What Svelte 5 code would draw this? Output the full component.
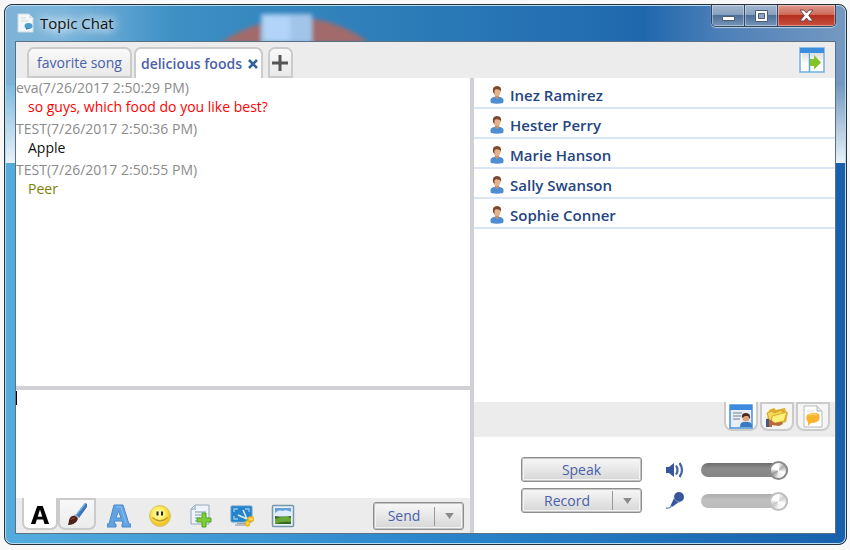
<script lang="ts">
   const tabs = ["favorite song", "delicious foods"];
   let activeTab = $state("delicious foods");

   const messages = [
      { head: "eva(7/26/2017 2:50:29 PM)", text: "so guys, which food do you like best?", tone: "red" },
      { head: "TEST(7/26/2017 2:50:36 PM)", text: "Apple", tone: "black" },
      { head: "TEST(7/26/2017 2:50:55 PM)", text: "Peer", tone: "olive" },
   ];

   const members = ["Inez Ramirez", "Hester Perry", "Marie Hanson", "Sally Swanson", "Sophie Conner"];

   let draft = $state("");
   let speaker = $state(100);
   let microphone = $state(100);
</script>

{#snippet person()}
   <svg class="person" width="14" height="18" viewBox="0 0 14 18" aria-hidden="true">
      <path d="M1 17q-2-5 3-6l3-1 3 1q5 1 3 6-6 1.500-12 0z" fill="#4e8dd0" />
      <path d="M5 9h4v2.500l-2 1.500-2-1.500z" fill="#c98e68" />
      <ellipse cx="7" cy="5.500" rx="3.500" ry="4.500" fill="#e3b18c" />
      <path d="M3 6Q2 0 7 0q5 0 4 6l-1-2-4-1-1.500 1.500L4.500 8z" fill="#78472d" />
   </svg>
{/snippet}

<main class="window">
   <header class="titlebar">
      <svg class="wallpaper" width="150" height="36" viewBox="0 0 150 36" aria-hidden="true">
         <defs>
            <filter id="soft"><feGaussianBlur stdDeviation="2" /></filter>
         </defs>
         <g filter="url(#soft)">
            <path d="M0 38Q35 14 78 13q38 0 72 25z" fill="#a26b6a" />
            <path d="M41 9h51v29H41z" fill="#a1c4e9" />
            <path d="M44 11h26v25H44z" fill="#b1d4f8" />
         </g>
      </svg>
      <svg class="app-icon" width="17" height="20" viewBox="0 0 17 20" aria-hidden="true">
         <path d="M2 1h10l4 4v14H1V1z" fill="#f4f7fa" stroke="#cbdbe6" />
         <path d="M12 1v4h4" fill="#d5e1ea" />
         <path d="M4 5h5M4 8h7" stroke="#d0d9df" />
         <ellipse cx="11.500" cy="13" rx="4" ry="3" fill="#4b9dce" />
         <path d="M9 15v2l4-2z" fill="#3581b4" />
      </svg>
      <h1>Topic Chat</h1>
      <div class="caption">
         <button aria-label="Minimize">
            <svg width="15" height="12" viewBox="0 0 15 12"><path d="M1.500 6.500h12v4h-12z" fill="#fff" stroke="#4d5e74" /></svg>
         </button>
         <button aria-label="Maximize">
            <svg width="15" height="14" viewBox="0 0 15 14">
               <path d="M1.500 1.500h12v11h-12z" fill="#fff" stroke="#4d5e74" />
               <path d="M4.500 4.500h6v5h-6z" fill="#8ea3bc" stroke="#4d5e74" />
            </svg>
         </button>
         <button class="shut" aria-label="Close">
            <svg width="15" height="13" viewBox="0 0 15 13">
               <path d="M1 1h4l2.500 3L10 1h4L9.800 6.500 14 12h-4L7.500 9 5 12H1l4.200-5.500z" fill="#fff" stroke="#69494f" />
            </svg>
         </button>
      </div>
   </header>

   <div class="client">
      <nav class="topics" aria-label="Topics">
         {#each tabs as tab}
            <div class="topic" class:active={tab === activeTab}>
               <button class="topic-name" onclick={() => (activeTab = tab)}>{tab}</button>
               {#if tab === activeTab}
                  <button class="topic-close" aria-label="Close topic">
                     <svg width="10" height="10" viewBox="0 0 10 10"><path d="M1 1l8 8M9 1L1 9" stroke="#2f6498" stroke-width="2.600" /></svg>
                  </button>
               {/if}
            </div>
         {/each}
         <button class="add" aria-label="Add topic">
            <svg width="16" height="16" viewBox="0 0 16 16"><path d="M8 0v16M0 8h16" stroke="#555" stroke-width="3" /></svg>
         </button>
         <button class="toggle" aria-label="Toggle side panel">
            <svg width="26" height="26" viewBox="0 0 26 26">
               <defs>
                  <linearGradient id="pane" x2="0" y2="1"><stop stop-color="#dcdcdc" /><stop offset="0.700" stop-color="#fff" /></linearGradient>
               </defs>
               <path d="M1 1h24v24H1z" fill="#fff" stroke="#73aee0" stroke-width="1.500" />
               <path d="M3 5h7v18H3zM12 5h12v18H12z" fill="url(#pane)" />
               <path d="M1 1h24v5H1z" fill="#3b8de0" />
               <path d="M10.500 5v20" stroke="#5ca7e2" stroke-width="1.500" />
               <path d="M11 12h4V8l7 7.500-7 7V19h-4z" fill="#84c225" />
            </svg>
         </button>
      </nav>

      <div class="panes">
         <section class="talk">
            <div class="log">
               {#each messages as message}
                  <article>
                     <p class="head">{message.head}</p>
                     <p class="text {message.tone}">{message.text}</p>
                  </article>
               {/each}
            </div>
            <div class="compose">
               <span class="caret"></span>
               <textarea aria-label="Message" bind:value={draft}></textarea>
            </div>
            <div class="toolbar">
               <button class="tool first" aria-label="Font">
                  <svg width="20" height="20" viewBox="0 0 20 22">
                     <path fill-rule="evenodd" d="M7 1h6l7 20h-5l-1.500-5h-7L5 21H0zM10 5L7.500 13h5z" fill="#000" />
                  </svg>
               </button>
               <button class="tool brush" aria-label="Text color">
                  <svg width="22" height="24" viewBox="0 0 22 24">
                     <path d="M10 13L19 1l2 1v3l-8 11z" fill="#3976bd" />
                     <path d="M11 12l8-10" stroke="#75acdf" stroke-width="1.500" />
                     <path d="M9 12l4 3-2 3-4-3z" fill="#a8b0b8" />
                     <path d="M2 23q1-3 1-5 2-5 6-4 4 2 2 5-3 4-9 4z" fill="#4b2119" />
                     <path d="M5 18q2-3 4-2" stroke="#8f5141" fill="none" />
                  </svg>
               </button>
               <div class="plain-tools">
                  <button class="tool" aria-label="Font effects">
                     <svg width="24" height="24" viewBox="0 0 24 24">
                        <path fill-rule="evenodd" d="M7 1h9l6 19h2v3h-9v-3h1l-1-3H8l-1 3h2v3H0v-3h2zM11.500 7L9 14h5z" fill="#63a3e2" stroke="#4a89ca" />
                        <path d="M9 3h5l5 16" fill="none" stroke="#8ac1f1" />
                     </svg>
                  </button>
                  <button class="tool" aria-label="Emoticons">
                     <svg width="24" height="24" viewBox="0 0 24 24">
                        <defs>
                           <radialGradient id="smile" cx="0.450" cy="0.400"><stop stop-color="#fffcc4" /><stop offset="0.600" stop-color="#ffee62" /><stop offset="1" stop-color="#ecc52f" /></radialGradient>
                        </defs>
                        <circle cx="12" cy="12" r="10.500" fill="url(#smile)" stroke="#dfc468" />
                        <path d="M8.500 7.500h2v4h-2zM13 7.500h2v4h-2z" fill="#272218" />
                        <path d="M4.500 13.500q7.500 7 15 0" fill="none" stroke="#c29728" stroke-width="1.200" />
                     </svg>
                  </button>
                  <button class="tool" aria-label="Send file">
                     <svg width="24" height="24" viewBox="0 0 24 24">
                        <path d="M6 1h14v19H2V5z" fill="#edf3f8" stroke="#93a8b9" />
                        <path d="M6 1v4H2M6 8h11M6 11h6M6 14h5M6 17h5" fill="none" stroke="#a3b8c8" stroke-width="1.500" />
                        <path d="M13 9h4v5h5v4h-5v5h-4v-5H8v-4h5z" fill="#79cf35" stroke="#56a326" />
                     </svg>
                  </button>
                  <button class="tool" aria-label="Screen capture">
                     <svg width="24" height="24" viewBox="0 0 24 24">
                        <path d="M7 19h8v2H7z" fill="#9aa6ae" /><path d="M5 21h12" stroke="#b5bec4" stroke-width="2" />
                        <rect x="1" y="2" width="21" height="16" rx="1" fill="#2383cb" stroke="#5f9cc6" />
                        <path d="M4 8V5h4M15 5h4v3M4 12v3h4" fill="none" stroke="#8fcbed" stroke-width="1.300" />
                        <path d="M13 6l4 9M8 11l9 4" stroke="#dfebf3" stroke-width="1.600" />
                        <ellipse cx="21" cy="15" rx="3" ry="2" fill="#f8d95b" stroke="#f0b81b" stroke-width="1.500" />
                        <ellipse cx="17.500" cy="19.500" rx="2" ry="2.500" fill="#f8d95b" stroke="#f0b81b" stroke-width="1.500" />
                     </svg>
                  </button>
                  <button class="tool" aria-label="Send picture">
                     <svg width="24" height="24" viewBox="0 0 24 24">
                        <rect x="1.500" y="1.500" width="21" height="21" rx="1" fill="#e9f1f5" stroke="#7397ad" stroke-width="1.500" />
                        <path d="M4 4h16v16H4z" fill="#649fdc" />
                        <path d="M4 9q4-4 7-2 5-2 9 1v5H4z" fill="#dcecfa" />
                        <path d="M4 12q7 1 16 0v8H4z" fill="#356b24" />
                        <path d="M4 15q9-4 16-1v4q-10-1-16 2z" fill="#68a936" />
                     </svg>
                  </button>
               </div>
               <div class="split send">
                  <button>Send</button>
                  <button class="more" aria-label="Send options"><svg width="9" height="6" viewBox="0 0 10 7"><path d="M0 0h10L5 7z" fill="#8b8b8b" /></svg></button>
               </div>
            </div>
         </section>

         <aside class="side">
            <ul class="members">
               {#each members as name}
                  <li>{@render person()}<span>{name}</span></li>
               {/each}
            </ul>
            <div class="views">
               <button class="view active" aria-label="Members">
                  <svg width="24" height="25" viewBox="0 0 24 25">
                     <path d="M1 1h22v23H1z" fill="#e9eef5" stroke="#4792dc" stroke-width="1.500" />
                     <path d="M1 1h22v5H1z" fill="#3d8ae0" />
                     <path d="M4 9h9M4 12h8M4 15h7" stroke="#9ba5b1" stroke-width="1.500" />
                     <path d="M11 23q0-5 4-5h4q4 0 4 5z" fill="#397bc2" />
                     <circle cx="17" cy="14" r="3.500" fill="#dda27c" />
                     <path d="M13 14q-1-5 4-5t4 6l-2-3h-3z" fill="#4f2b24" />
                  </svg>
               </button>
               <button class="view" aria-label="Files">
                  <svg width="24" height="24" viewBox="0 0 24 24">
                     <path d="M2 15l2-10 5-2 2 2 9-2 1 4 2 1-2 9-12 3z" fill="#e2ad29" />
                     <path d="M2 8l5-2 2 2 8-3 1 8-13 4z" fill="#f7d95a" stroke="#d7a52a" />
                     <path d="M7 11l15-4-3 9-13 3z" fill="#fff079" stroke="#daae31" />
                     <path d="M2 14v8h5v-2l7 1 4-2-1-2-7 1-4-3z" fill="#b8693c" />
                     <path d="M1 14h3v8H1z" fill="#47597f" />
                  </svg>
               </button>
               <button class="view" aria-label="Messages">
                  <svg width="20" height="23" viewBox="0 0 20 23">
                     <path d="M1 1h13l5 5v16H1z" fill="#fff" stroke="#b3bac0" />
                     <path d="M14 1v5h5" fill="#e1e4e7" stroke="#b3bac0" />
                     <path d="M4 6h7" stroke="#d9dde0" />
                     <path d="M4 10q6-4 12-1 2 5-2 8-3 1-6 1l-3 3v-4q-3-3-1-7z" fill="#f9b42e" />
                     <path d="M6 10q4-2 8 0" stroke="#ffe38b" fill="none" />
                  </svg>
               </button>
            </div>
            <div class="audio">
               <div class="audio-row">
                  <button class="speak">Speak</button>
                  <label for="speaker" aria-label="Speaker volume">
                     <svg width="20" height="20" viewBox="0 0 20 20">
                        <path d="M1 7h3l5-4v14l-5-4H1z" fill="#38569c" />
                        <path d="M11 5.500q3 4.500 0 9M14.500 3q5 7 0 14" fill="none" stroke="#4563a6" stroke-width="2.200" />
                     </svg>
                  </label>
                  <input id="speaker" type="range" bind:value={speaker} />
               </div>
               <div class="audio-row">
                  <div class="split record">
                     <button>Record</button>
                     <button class="more" aria-label="Record options"><svg width="9" height="6" viewBox="0 0 10 7"><path d="M0 0h10L5 7z" fill="#8b8b8b" /></svg></button>
                  </div>
                  <label for="microphone" aria-label="Microphone volume">
                     <svg width="20" height="20" viewBox="0 0 20 20">
                        <circle cx="14" cy="6" r="5" fill="#38569c" />
                        <path d="M9 7l5 4-7 5H5z" fill="#38569c" />
                        <path d="M1 17q3 1 6-2" fill="none" stroke="#8197c7" stroke-width="1.500" />
                        <path d="M9 6q1 5 6 5" fill="none" stroke="#8197c7" />
                     </svg>
                  </label>
                  <input id="microphone" class="faint" type="range" bind:value={microphone} />
               </div>
            </div>
         </aside>
      </div>
   </div>
</main>

<style>
   :global(body) {
      background: #f8f8f8;
   }

   :global(*) {
      box-sizing: border-box;
   }

   .window {
      font-family: "Open Sans", "Noto Sans", sans-serif;
      font-size: 14px;
      line-height: 20px;
      display: flex;
      flex-direction: column;
      min-height: calc(100vh - 9px);
      margin: 4px 3px 5px 4px;
      padding: 0 10px 10px;
      border: 1px solid #25303b;
      border-radius: 8px;
      box-shadow: inset 0 0 0 1px #b7dcf0;
      background:
         linear-gradient(90deg, #7fb3d6 0, #79b5dc 60px, #3d8fc4 170px, #2d7eb9 45%, #2068ae 76%, #4c7fb8 85%, #7599c1) 0 0 / 100% 80px no-repeat,
         linear-gradient(#8abfe000, #e8f2f8) 0 80px / 100% 78px no-repeat,
         linear-gradient(90deg, #80bce0, #2d7eb9, #7599c1) 0 80px / 100% 78px no-repeat,
         linear-gradient(90deg, #54acdd, #2b86cc 50%, #1860ae);
   }

   button {
      font: inherit;
      color: #4961a9;
      padding: 0;
      border: 0;
      background: none;
      cursor: pointer;
   }

   svg {
      display: block;
   }

   p,
   h1,
   ul {
      margin: 0;
      padding: 0;
   }

   .titlebar {
      position: relative;
      display: flex;
      align-items: center;
      gap: 6px;
      height: 36px;
      padding-left: 2px;
   }

   .wallpaper {
      position: absolute;
      left: 25%;
      top: 0;
   }

   h1 {
      flex: 1;
      font-size: 15px;
      font-weight: 400;
      color: #111;
      text-shadow: 0 0 8px #fff, 0 0 12px #fff, 0 0 16px #fff;
   }

   .caption {
      display: flex;
      align-self: flex-start;
      height: 22px;
      border: 1px solid #344760;
      border-top: 0;
      border-radius: 0 0 5px 5px;
      box-shadow: 0 1px 1px #bdd2e5;
      overflow: hidden;
   }

   .caption button {
      display: grid;
      place-items: center;
      width: 33px;
      border-right: 1px solid #344760;
      background: linear-gradient(#a5b9d0, #87a1bf 45%, #4d6f99 50%, #7594b8);
      box-shadow: inset 0 0 0 1px #ffffff60;
   }

   .caption .shut {
      width: 57px;
      border: 0;
      background: linear-gradient(#df9a8d, #cf6b5b 45%, #b52e1e 50%, #c9503f);
   }

   .client {
      flex: 1;
      display: flex;
      flex-direction: column;
      border: 1px solid #5b7183;
      background: #fff;
   }

   .topics {
      display: flex;
      align-items: flex-end;
      gap: 2px;
      height: 36px;
      padding: 0 10px 0 11px;
      background: #ececec;
   }

   .topic,
   .add {
      display: flex;
      align-items: center;
      height: 31px;
      border: 2px solid #cbcbcb;
      border-radius: 7px 7px 0 0;
      background: linear-gradient(#f9f9f9, #e9e9e9);
   }

   .topic {
      padding: 0 8px;
      gap: 6px;
   }

   .topic.active {
      padding: 0 3px 0 5px;
      border-bottom: 0;
      background: #fff;
      font-weight: 600;
   }

   .add {
      justify-content: center;
      width: 25px;
      margin-left: 3px;
   }

   .toggle {
      align-self: center;
      margin-left: auto;
   }

   .panes {
      flex: 1;
      display: grid;
      grid-template-columns: minmax(0, 454fr) minmax(0, 365fr);
   }

   .talk {
      display: flex;
      flex-direction: column;
   }

   .log {
      flex: 1;
      border-bottom: 4px solid #d0d0d5;
   }

   .log article {
      padding-bottom: 3px;
   }

   .log p {
      line-height: 19px;
   }

   .head {
      color: #8b8b8b;
   }

   .text {
      padding-left: 12px;
   }

   .red {
      color: #f00;
   }

   .black {
      color: #111;
   }

   .olive {
      color: #808000;
   }

   .compose {
      position: relative;
      display: flex;
      height: 108px;
   }

   .caret {
      position: absolute;
      left: 0;
      top: 1px;
      width: 1px;
      height: 14px;
      background: #000;
   }

   textarea {
      flex: 1;
      padding: 0 2px;
      border: 0;
      outline: 0;
      resize: none;
      font: inherit;
   }

   .toolbar {
      display: flex;
      height: 35px;
      padding: 0 6px;
      background: #ececec;
   }

   .tool {
      display: grid;
      place-items: center;
   }

   .first,
   .brush {
      width: 36px;
      height: 32px;
      border: 2px solid #cbcbcb;
      border-top: 0;
      border-radius: 0 0 7px 7px;
      background: #fff;
   }

   .first {
      padding-top: 4px;
   }

   .brush {
      width: 38px;
      border-top: 2px solid #cbcbcb;
      background: linear-gradient(#f8f8f8, #ececec);
   }

   .plain-tools {
      display: flex;
      align-items: center;
      gap: 17px;
      padding-left: 11px;
   }

   .split,
   .speak {
      display: flex;
      align-items: center;
      border: 1px solid #8e8e8e;
      border-radius: 3px;
      background: linear-gradient(#f8f8f8, #e7e7e7 50%, #d5d5d5);
      box-shadow: inset 0 0 0 1px #c4c4c4, inset 0 0 0 2px #f4f4f4;
   }

   .split button:first-child {
      flex: 1;
   }

   .split .more {
      display: grid;
      place-items: center;
      width: 29px;
      height: 19px;
      border-left: 1px solid #999;
   }

   .send {
      width: 91px;
      height: 28px;
      margin: 4px 0 0 auto;
   }

   .side {
      display: flex;
      flex-direction: column;
      border-left: 4px solid #d0d0d5;
   }

   .members {
      flex: 1;
      padding-top: 1px;
      list-style: none;
   }

   .members li {
      display: flex;
      align-items: center;
      gap: 6px;
      height: 30px;
      padding: 3px 16px 0;
      border-bottom: 2px solid #dbe6f4;
      color: #244580;
      font-size: 15px;
      font-weight: 600;
   }

   .views {
      display: flex;
      justify-content: flex-end;
      gap: 2px;
      height: 35px;
      padding-right: 5px;
      background: #ececec;
   }

   .view {
      display: grid;
      place-items: center;
      width: 34px;
      height: 29px;
      border: 2px solid #cbcbcb;
      border-radius: 0 0 8px 8px;
      background: #f5f5f5;
   }

   .view.active {
      padding-top: 2px;
      border-top: 0;
      background: #fff;
   }

   .audio {
      display: flex;
      flex-direction: column;
      gap: 6px;
      height: 96px;
      padding: 20px 0 0 47px;
   }

   .audio-row {
      display: flex;
      align-items: center;
      height: 25px;
   }

   .speak,
   .record {
      justify-content: center;
      width: 121px;
      height: 25px;
   }

   label {
      margin: 0 16px 0 23px;
   }

   input {
      appearance: none;
      width: 87px;
      height: 20px;
      margin: 0;
      background: none;
   }

   input::-webkit-slider-runnable-track {
      height: 14px;
      border-radius: 7px;
      background: linear-gradient(#6c6c6c, #8b8b8b 40%, #858585);
   }

   input::-webkit-slider-thumb {
      appearance: none;
      width: 19px;
      height: 19px;
      margin-top: -2px;
      border: 2px solid #8b8b8b;
      border-radius: 50%;
      background: conic-gradient(#fff, #aaa 50deg, #fff 110deg, #eee 180deg, #999 240deg, #fff 290deg);
   }

   .faint {
      opacity: 0.55;
   }
</style>
